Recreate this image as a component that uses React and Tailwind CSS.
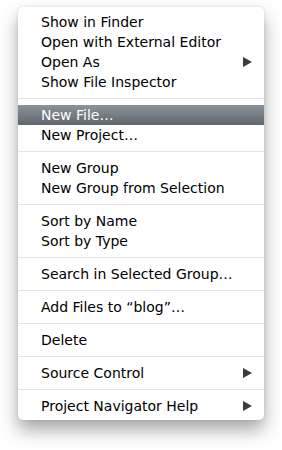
const groups = [
  [
    { label: 'Show in Finder' },
    { label: 'Open with External Editor' },
    { label: 'Open As', submenu: true },
    { label: 'Show File Inspector' },
  ],
  [
    { label: 'New File…', active: true },
    { label: 'New Project…' },
  ],
  [
    { label: 'New Group' },
    { label: 'New Group from Selection' },
  ],
  [
    { label: 'Sort by Name' },
    { label: 'Sort by Type' },
  ],
  [{ label: 'Search in Selected Group…' }],
  [{ label: 'Add Files to “blog”…' }],
  [{ label: 'Delete' }],
  [{ label: 'Source Control', submenu: true }],
  [{ label: 'Project Navigator Help', submenu: true }],
];

const Arrow = ({ active }) => (
  <svg width="9" height="10" viewBox="0 0 9 10" className="shrink-0">
    <polygon points="0,0 9,5 0,10" fill={active ? '#ffffff' : '#3a3a3a'} />
  </svg>
);

const MenuItem = ({ label, submenu, active }) => (
  <div
    className={`h-[20px] flex items-center justify-between pl-[23px] pr-[12px] ${
      active ? 'bg-gradient-to-b from-[#8d939b] to-[#60666e] text-white' : 'text-black'
    }`}
  >
    <span className="whitespace-nowrap">{label}</span>
    {submenu && <Arrow active={active} />}
  </div>
);

const Separator = () => (
  <div className="h-[13px] flex items-center">
    <div className="h-px w-full bg-[#e4e4e4]" />
  </div>
);

export default function App() {
  return (
    <div className="w-[282px] h-[450px] bg-white pt-[7px] pl-[18px]">
      <div
        className="w-[246px] bg-white rounded-[5px] pt-[5px] pb-[4px] shadow-[0_10px_18px_rgba(0,0,0,0.35),0_0_3px_rgba(0,0,0,0.12)] text-[14px] leading-[20px]"
        style={{ fontFamily: '"DejaVu Sans", Verdana, sans-serif' }}
      >
        {groups.map((items, gi) => (
          <div key={gi}>
            {gi > 0 && <Separator />}
            {items.map((item) => (
              <MenuItem key={item.label} {...item} />
            ))}
          </div>
        ))}
      </div>
    </div>
  );
}
